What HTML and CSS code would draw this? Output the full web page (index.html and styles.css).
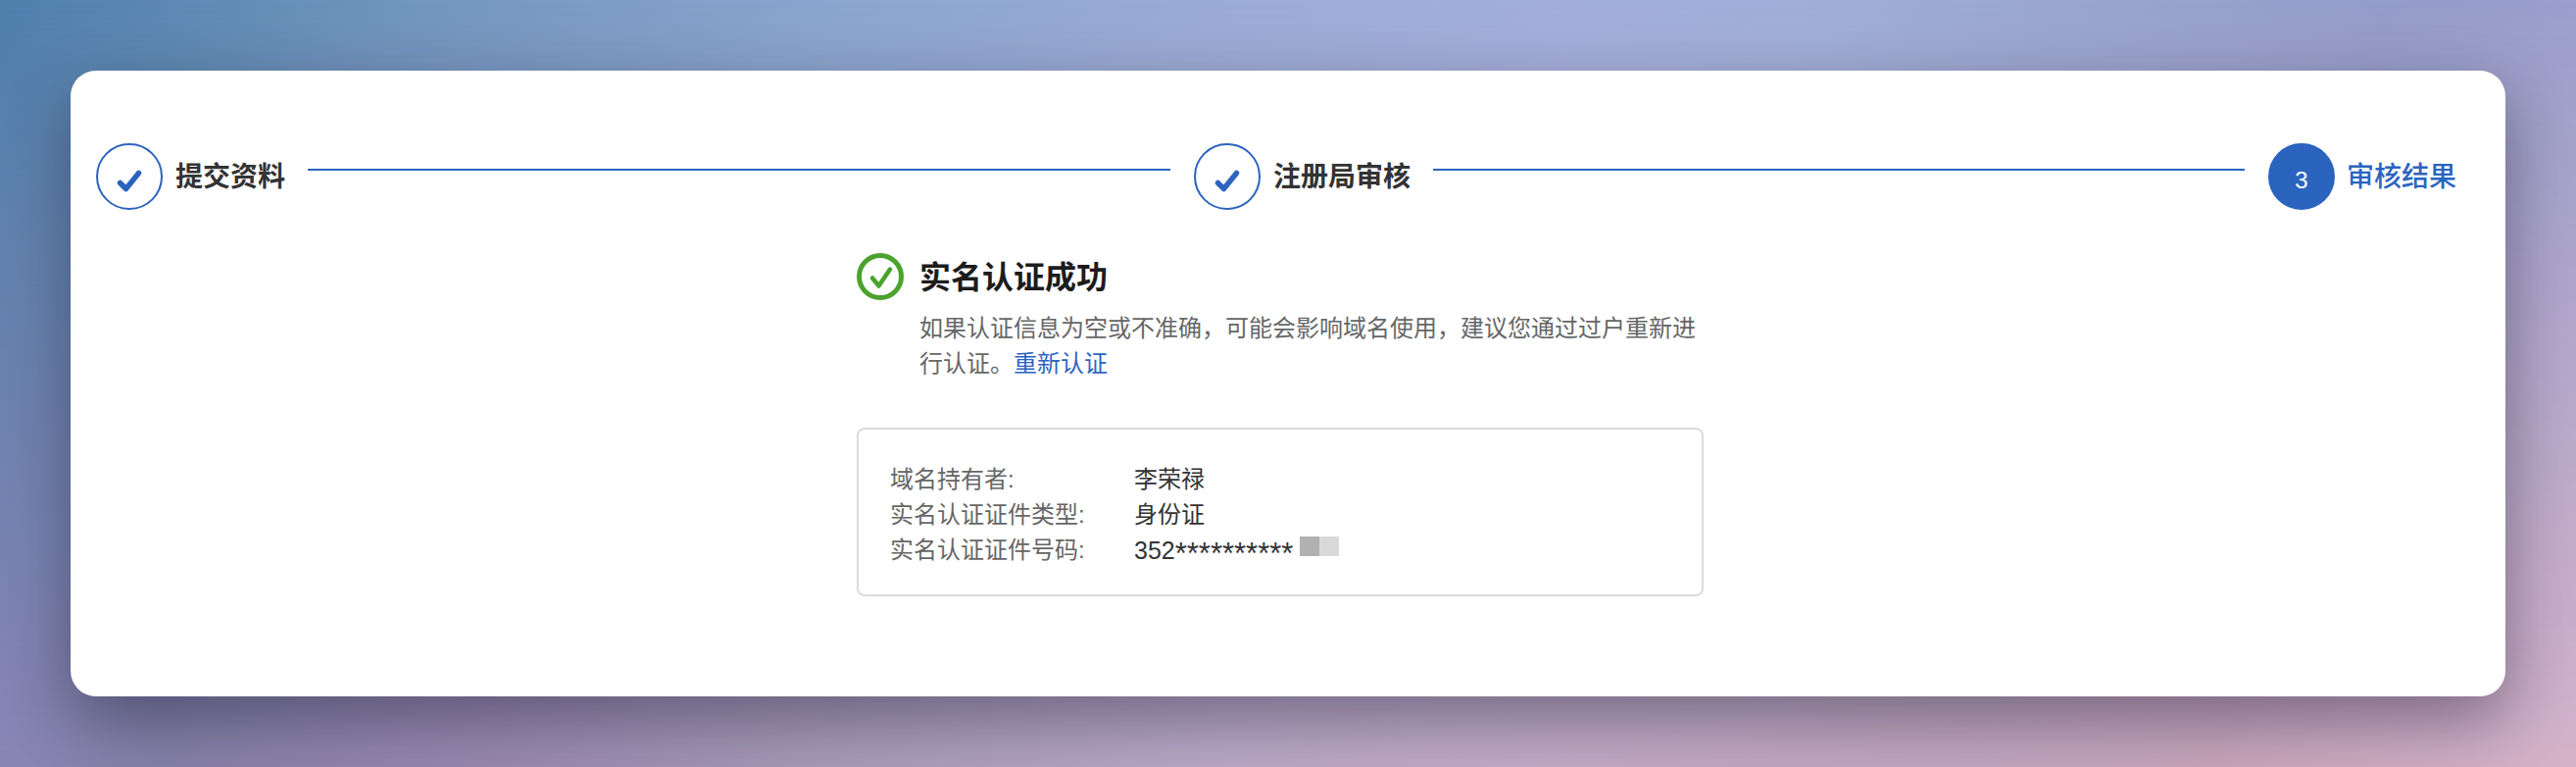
FILE: index.html
```html
<!DOCTYPE html>
<html lang="zh-CN">
<head>
<meta charset="utf-8">
<title>实名认证成功</title>
<link rel="stylesheet" href="styles.css">
</head>
<body>
<main class="card">
  <section class="steps">
    <div class="step">
      <span class="dot"><svg class="tick" viewBox="0 0 64 64" width="64" height="64"><path d="M22.500 38.500l6 6L41.500 28.500"/></svg></span>
      <span class="step-name">提交资料</span>
    </div>
    <div class="line line-a"></div>
    <div class="step">
      <span class="dot"><svg class="tick" viewBox="0 0 64 64" width="64" height="64"><path d="M22.500 38.500l6 6L41.500 28.500"/></svg></span>
      <span class="step-name">注册局审核</span>
    </div>
    <div class="line line-b"></div>
    <div class="step current">
      <span class="dot">3</span>
      <span class="step-name">审核结果</span>
    </div>
  </section>
  <section class="result">
    <div class="head">
      <svg class="ok" viewBox="0 0 48 48" width="48" height="48"><circle cx="24" cy="24" r="21.500"/><path d="M16 25.500l6.500 8 11.500-17"/></svg>
      <h1>实名认证成功</h1>
    </div>
    <p class="desc">如果认证信息为空或不准确，可能会影响域名使用，建议您通过过户重新进行认证。<a href="#">重新认证</a></p>
    <dl class="info">
      <dt>域名持有者:</dt><dd>李荣禄</dd>
      <dt>实名认证证件类型:</dt><dd>身份证</dd>
      <dt>实名认证证件号码:</dt><dd class="id-no">352<span class="stars">**********</span><span class="mask"><i></i><i></i></span></dd>
    </dl>
  </section>
</main>
</body>
</html>
```
FILE: styles.css
```css
* { box-sizing: border-box; }
html, body { margin: 0; height: 782px; overflow: hidden; }
body {
  position: relative;
  padding: 72px;
  font-family: "Liberation Sans", "Noto Sans CJK SC", sans-serif;
  background: linear-gradient(90deg, #4e80ac 0, #7196bf 420px, #8aa5cf 840px, #9bacd6 1257px, #a3aedb 1592px, #a0afd8 1844px, #9aa6d0 2095px, #949cc8 2430px, #9a9fcc 2628px);
}
body::before {
  content: "";
  position: absolute;
  inset: 0;
  background: linear-gradient(90deg, #8a85b5 0, #8680a8 168px, #9a88ae 503px, #a89ab8 838px, #bba8c6 1257px, #c2aac4 1592px, #c2a6be 2011px, #c8a5bc 2263px, #d4b2ca 2628px);
  -webkit-mask-image: linear-gradient(180deg, transparent, #000);
  mask-image: linear-gradient(180deg, transparent, #000);
}
.card {
  position: relative;
  height: 638px;
  padding: 74px 0 0 26px;
  background: #fff;
  border-radius: 26px;
  box-shadow: 0 24px 64px rgba(20, 20, 40, .42);
}
.steps { display: flex; align-items: center; height: 68px; }
.step { display: flex; align-items: center; gap: 13px; flex: none; }
.current { gap: 12px; }
.dot {
  width: 68px;
  height: 68px;
  display: flex;
  flex: none;
  align-items: center;
  justify-content: center;
  border: 2px solid #2b64bf;
  border-radius: 50%;
}
.current .dot { padding-top: 7px; background: #2b64bf; color: #fff; font-size: 24px; }
.tick { fill: none; stroke: #2b64bf; stroke-width: 5.500; stroke-linecap: round; stroke-linejoin: round; }
.step-name { padding-top: 2px; font-size: 28px; line-height: 40px; font-weight: 600; color: #333; white-space: nowrap; }
.current .step-name { color: #2b64bf; font-weight: 500; }
.line { height: 2px; margin: 0 24px 14px 23px; background: #2b64bf; flex: none; }
.line-a { width: 880px; }
.line-b { width: 828px; }
.result { margin: 44px 0 0 776px; width: 864px; }
.head { display: flex; align-items: center; gap: 16px; height: 48px; }
.ok { fill: none; stroke: #4aa32d; }
.ok circle { stroke-width: 5; }
.ok path { stroke-width: 4.500; stroke-linecap: round; stroke-linejoin: round; }
h1 { margin: 0; padding-top: 2px; font-size: 32px; line-height: 44px; font-weight: 600; color: #1c1c1c; }
.desc { margin: 11px 0 47px 64px; width: 800px; font-size: 24px; line-height: 36px; color: #666; }
.desc a { color: #2b64bf; text-decoration: none; }
.info {
  display: grid;
  grid-template-columns: 249px 1fr;
  height: 172px;
  margin: 0;
  padding: 33px 32px 27px;
  border: 2px solid #dadbdb;
  border-radius: 8px;
  font-size: 24px;
  line-height: 36px;
}
.info dt { color: #666; }
.info dd { margin: 0; color: #333; }
.id-no { display: flex; align-items: flex-start; font-size: 25px; }
.stars { font-size: 31px; line-height: 30px; margin-top: 7px; }
.mask { display: flex; margin: 4px 0 0 7px; }
.mask i { width: 20px; height: 20px; background: #b1b1b1; }
.mask i + i { background: #d9d9d9; }
```
